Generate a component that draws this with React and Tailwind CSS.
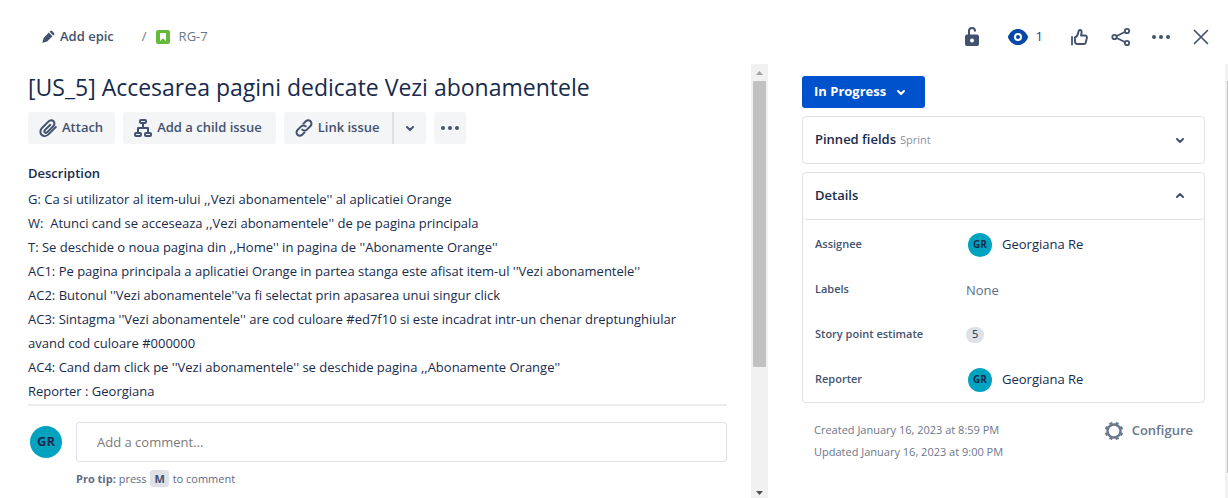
import React from "react";

const description = [
  "G: Ca si utilizator al item-ului ,,Vezi abonamentele'' al aplicatiei Orange",
  "W:  Atunci cand se acceseaza ,,Vezi abonamentele'' de pe pagina principala",
  "T: Se deschide o noua pagina din ,,Home'' in pagina de ''Abonamente Orange''",
  "AC1: Pe pagina principala a aplicatiei Orange in partea stanga este afisat item-ul ''Vezi abonamentele''",
  "AC2: Butonul ''Vezi abonamentele''va fi selectat prin apasarea unui singur click",
  "AC3: Sintagma ''Vezi abonamentele'' are cod culoare #ed7f10 si este incadrat intr-un chenar dreptunghiular avand cod culoare #000000",
  "AC4: Cand dam click pe ''Vezi abonamentele'' se deschide pagina ,,Abonamente Orange''",
  "Reporter : Georgiana",
];

function Icon({ children, className = "size-6", viewBox = "0 0 24 24" }) {
  return (
    <svg
      className={className}
      viewBox={viewBox}
      fill="none"
      stroke="currentColor"
      strokeWidth="2"
      strokeLinecap="round"
      strokeLinejoin="round"
      aria-hidden="true"
    >
      {children}
    </svg>
  );
}

const Pencil = () => (
  <Icon className="size-4" viewBox="0 0 16 16">
    <path
      d="M8.800 3.500l3.700 3.700-5.400 5.400-4.200 1.200c-.4.1-.6-.1-.5-.5l1.200-4.200zM9.600 2.800l.8-.7c.5-.5 1.300-.5 1.800 0l1.800 1.800c.5.5.5 1.300 0 1.800l-.8.8z"
      fill="currentColor"
      stroke="none"
    />
  </Icon>
);

const Story = () => (
  <Icon className="size-4" viewBox="0 0 16 16">
    <rect x="1" y="1" width="14" height="14" rx="2" fill="#63ba3c" stroke="none" />
    <path d="M5 4.500a.5.5 0 0 1 .5-.5h5a.5.5 0 0 1 .5.5V12L8 9.300 5 12z" fill="#fff" stroke="none" />
  </Icon>
);

const Unlock = () => (
  <Icon>
    <path d="M9 10V6a3 3 0 0 1 6 0v.5" strokeLinecap="butt" />
    <path
      fillRule="evenodd"
      d="M7 9.500h10a2 2 0 0 1 2 2v7.500a2 2 0 0 1-2 2H7a2 2 0 0 1-2-2v-7.500a2 2 0 0 1 2-2zm5 4a2 2 0 1 0 0 4 2 2 0 0 0 0-4z"
      fill="currentColor"
      stroke="none"
    />
  </Icon>
);

const Eye = () => (
  <Icon>
    <path
      fillRule="evenodd"
      d="M12 4C7.800 4 4.700 6.500 2.400 10.600c-.5.9-.5 1.900 0 2.800C4.700 17.500 7.800 20 12 20s7.300-2.500 9.600-6.600c.5-.9.5-1.900 0-2.800C19.300 6.500 16.200 4 12 4zm0 4a4 4 0 1 1 0 8 4 4 0 0 1 0-8z"
      fill="currentColor"
      stroke="none"
    />
    <circle cx="12" cy="12" r="2" fill="currentColor" stroke="none" />
  </Icon>
);

const Thumb = () => (
  <Icon>
    <path d="M5 12v7.500" strokeWidth="1.800" />
    <path
      strokeWidth="1.900"
      d="M8 12.500c1.600-.6 3-2.800 3.300-5.100.2-1.600.7-2.400 1.700-2.400 1.400 0 1.900 1.400 1.500 3.200L14 10.500h4a1.900 1.900 0 0 1 1.900 2.300l-1.100 4.700a2 2 0 0 1-1.900 1.500h-6.400A2.500 2.500 0 0 1 8 16.500z"
    />
  </Icon>
);

const Share = () => (
  <Icon>
    <g strokeWidth="1.800">
      <circle cx="18" cy="6" r="2.200" />
      <circle cx="5.500" cy="12" r="2.200" />
      <circle cx="18" cy="18" r="2.200" />
      <path d="M7.700 11l8.200-4M7.700 13l8.200 4" />
    </g>
  </Icon>
);

const More = () => (
  <Icon>
    <g fill="currentColor" stroke="none">
      <circle cx="5" cy="12" r="2" />
      <circle cx="12" cy="12" r="2" />
      <circle cx="19" cy="12" r="2" />
    </g>
  </Icon>
);

const Close = () => (
  <Icon>
    <path d="M5.500 5.500l13 13M18.500 5.500l-13 13" strokeWidth="1.700" />
  </Icon>
);

const Clip = () => (
  <Icon>
    <path d="M19.800 11l-7.400 7.400c-2 2-5 2.200-6.800.4s-1.600-4.800.4-6.800l6.600-6.600c1.400-1.400 3.600-1.500 4.900-.2s1.200 3.500-.2 4.900l-6 6c-.8.8-1.900.9-2.500.3s-.5-1.700.3-2.500l5.200-5.200" />
  </Icon>
);

const Tree = () => (
  <Icon>
    <rect x="9" y="4" width="6" height="3" rx="1" />
    <rect x="4" y="17" width="6" height="3" rx="1" />
    <rect x="14" y="17" width="6" height="3" rx="1" />
    <path d="M12 7v5M7 17v-5h10v5" />
  </Icon>
);

const Chain = () => (
  <Icon>
    <path d="M11.500 7.600l2.300-2.300a3.300 3.300 0 0 1 4.700 4.700l-3.600 3.600a3.300 3.300 0 0 1-4.700 0" />
    <path d="M12.500 16.400l-2.300 2.300a3.300 3.300 0 0 1-4.700-4.700l3.600-3.600a3.300 3.300 0 0 1 4.700 0" />
  </Icon>
);

const Down = () => (
  <Icon>
    <path d="M9 11l3 3 3-3" />
  </Icon>
);

const Up = () => (
  <Icon>
    <path d="M9 13l3-3 3 3" />
  </Icon>
);

const Gear = () => (
  <Icon>
    <circle cx="12" cy="12" r="6.500" strokeWidth="2.400" />
    <path
      strokeWidth="3.200"
      strokeLinecap="butt"
      d="M14.700 5.500l.8-2M18.500 9.300l2-.8M18.500 14.700l2 .8M14.700 18.500l.8 2M9.300 18.500l-.8 2M5.500 14.700l-2 .8M5.500 9.300l-2-.8M9.300 5.500l-.8-2"
    />
  </Icon>
);

function Avatar({ className }) {
  return (
    <span
      className={`flex shrink-0 items-center justify-center rounded-full bg-[#00a3bf] font-bold text-[#172b4d] ${className}`}
    >
      GR
    </span>
  );
}

function Person() {
  return (
    <span className="flex items-center gap-2.5 pl-0.5 text-[13px] text-[#172b4d]">
      <Avatar className="size-6 text-[10px]" />
      Georgiana Re
    </span>
  );
}

function Field({ label, children }) {
  return (
    <div className="flex h-[45px] items-center px-3">
      <dt className="w-[151px] shrink-0 text-[11px] font-semibold text-[#44546f]">{label}</dt>
      <dd>{children}</dd>
    </div>
  );
}

const toolButton = "flex h-8 items-center bg-[#f4f5f7] text-[13px] font-semibold text-[#42526e]";

export default function App() {
  return (
    <div className="flex min-h-screen flex-col bg-white font-['Open_Sans','Noto_Sans',sans-serif] text-[#172b4d]">
      <header className="flex h-16 items-center justify-between pt-2.5 pr-[15px] pl-10 text-[#42526e]">
        <nav className="flex items-center text-[13px]" aria-label="Breadcrumb">
          <button type="button" className="flex items-center gap-1 font-semibold">
            <Pencil />
            Add epic
          </button>
          <span className="ml-7 text-[#6b778c]">/</span>
          <a href="#RG-7" className="ml-2 flex items-center gap-2 text-[#6b778c]">
            <Story />
            RG-7
          </a>
        </nav>
        <div className="flex items-center gap-4">
          <button type="button" aria-label="Restrict access" className="mr-1.5"><Unlock /></button>
          <button type="button" aria-label="Watchers" className="mr-2 flex items-center gap-1.5 text-[13px] text-[#0747a6]">
            <Eye />
            1
          </button>
          <button type="button" aria-label="Like" className="mr-0.5"><Thumb /></button>
          <button type="button" aria-label="Share"><Share /></button>
          <button type="button" aria-label="Actions"><More /></button>
          <button type="button" aria-label="Close"><Close /></button>
        </div>
      </header>

      <div className="flex flex-1">
        <main className="min-w-0 flex-1 pt-2 pr-6 pl-7">
          <h1 className="text-[23px] leading-[30px] font-medium">[US_5] Accesarea pagini dedicate Vezi abonamentele</h1>
          <div className="mt-2.5 flex gap-2">
            <button type="button" className={`${toolButton} gap-0.5 rounded-[3px] pr-3 pl-2`}>
              <Clip />
              Attach
            </button>
            <button type="button" className={`${toolButton} gap-0.5 rounded-[3px] pr-3.5 pl-2`}>
              <Tree />
              Add a child issue
            </button>
            <div className="flex">
              <button type="button" className={`${toolButton} gap-0.5 rounded-l-[3px] pr-3 pl-2`}>
                <Chain />
                Link issue
              </button>
              <button type="button" aria-label="Link options" className={`${toolButton} rounded-r-[3px] border-l-2 border-[#dfe1e6] px-1`}>
                <Down />
              </button>
            </div>
            <button type="button" aria-label="More actions" className={`${toolButton} rounded-[3px] px-1`}>
              <More />
            </button>
          </div>

          <h2 className="mt-5 text-[13px] leading-[18px] font-semibold">Description</h2>
          <div className="mt-[5px] border-b-2 border-[#ebecf0] pr-6 pb-px text-[13px] leading-6 whitespace-pre-wrap">
            {description.map((line) => (
              <p key={line}>{line}</p>
            ))}
          </div>

          <div className="mt-4 flex items-center gap-3.5 pl-0.5">
            <Avatar className="size-8 text-[13px]" />
            <input
              type="text"
              aria-label="Add a comment"
              placeholder="Add a comment…"
              className="h-10 min-w-0 flex-1 rounded-[3px] border border-[#dfe1e6] px-5 text-[13px] placeholder:text-[#7a7a7a]"
            />
          </div>
          <p className="mt-2 pl-12 text-[11px] leading-[18px] text-[#5e6c84]">
            <strong className="font-bold">Pro tip:</strong> press{" "}
            <kbd className="mx-px rounded-[3px] bg-[#dfe1e6] px-1 py-px font-['Open_Sans','Noto_Sans',sans-serif] font-bold text-[#42526e]">M</kbd>{" "}
            to comment
          </p>
        </main>

        <div className="flex w-[17px] shrink-0 flex-col items-center bg-[#f1f1f1]" aria-hidden="true">
          <Icon className="h-[17px] w-[17px]" viewBox="0 0 17 17">
            <path d="M5 11l3.500-4 3.500 4z" fill="#a3a3a3" stroke="none" />
          </Icon>
          <div className="h-[286px] w-[13px] bg-[#c1c1c1]" />
          <Icon className="mt-auto h-3 w-[17px]" viewBox="0 0 17 12">
            <path d="M5 5h7L8.500 9z" fill="#505050" stroke="none" />
          </Icon>
        </div>

        <aside className="w-[457px] shrink-0 pt-3 pr-5 pl-[34px]">
          <button type="button" className="flex h-8 items-center gap-[3px] rounded-[3px] bg-[#0052cc] px-3 text-[13px] font-bold text-white">
            In Progress
            <Down />
          </button>
          <button type="button" className="mt-2 flex h-12 w-full items-center rounded-[4px] border border-[#dfe1e6] px-3 text-left">
            <span className="text-[13px] font-semibold">Pinned fields</span>
            <span className="ml-1 flex-1 text-[11px] text-[#8993a4]">Sprint</span>
            <span className="text-[#42526e]"><Down /></span>
          </button>
          <section className="mt-2 rounded-[4px] border border-[#dfe1e6]">
            <button type="button" aria-expanded="true" className="flex h-[47px] w-full items-center justify-between rounded-b-[4px] border-b border-[#dfe1e6] px-3 text-[13px] font-semibold">
              Details
              <span className="text-[#42526e]"><Up /></span>
            </button>
            <dl className="pt-0.5">
              <Field label="Assignee"><Person /></Field>
              <Field label="Labels"><span className="block text-[13px] leading-5 text-[#5e6c84]">None</span></Field>
              <Field label="Story point estimate">
                <span className="flex h-4 items-center rounded-full bg-[#dfe1e6] px-1.5 text-[11px]">5</span>
              </Field>
              <Field label="Reporter"><Person /></Field>
            </dl>
          </section>
          <footer className="mt-4 flex items-start justify-between pr-3 pl-3 text-[#6b778c]">
            <p className="text-[11px] leading-[22px]">
              Created January 16, 2023 at 8:59 PM
              <br />
              Updated January 16, 2023 at 9:00 PM
            </p>
            <button type="button" className="flex items-center gap-1.5 text-[13px] font-semibold">
              <Gear />
              Configure
            </button>
          </footer>
        </aside>

        <div className="flex w-[3px] shrink-0 justify-end bg-[#f1f1f1] pt-[17px]" aria-hidden="true">
          <div className="h-[392px] w-px bg-[#c1c1c1]" />
        </div>
      </div>
    </div>
  );
}
